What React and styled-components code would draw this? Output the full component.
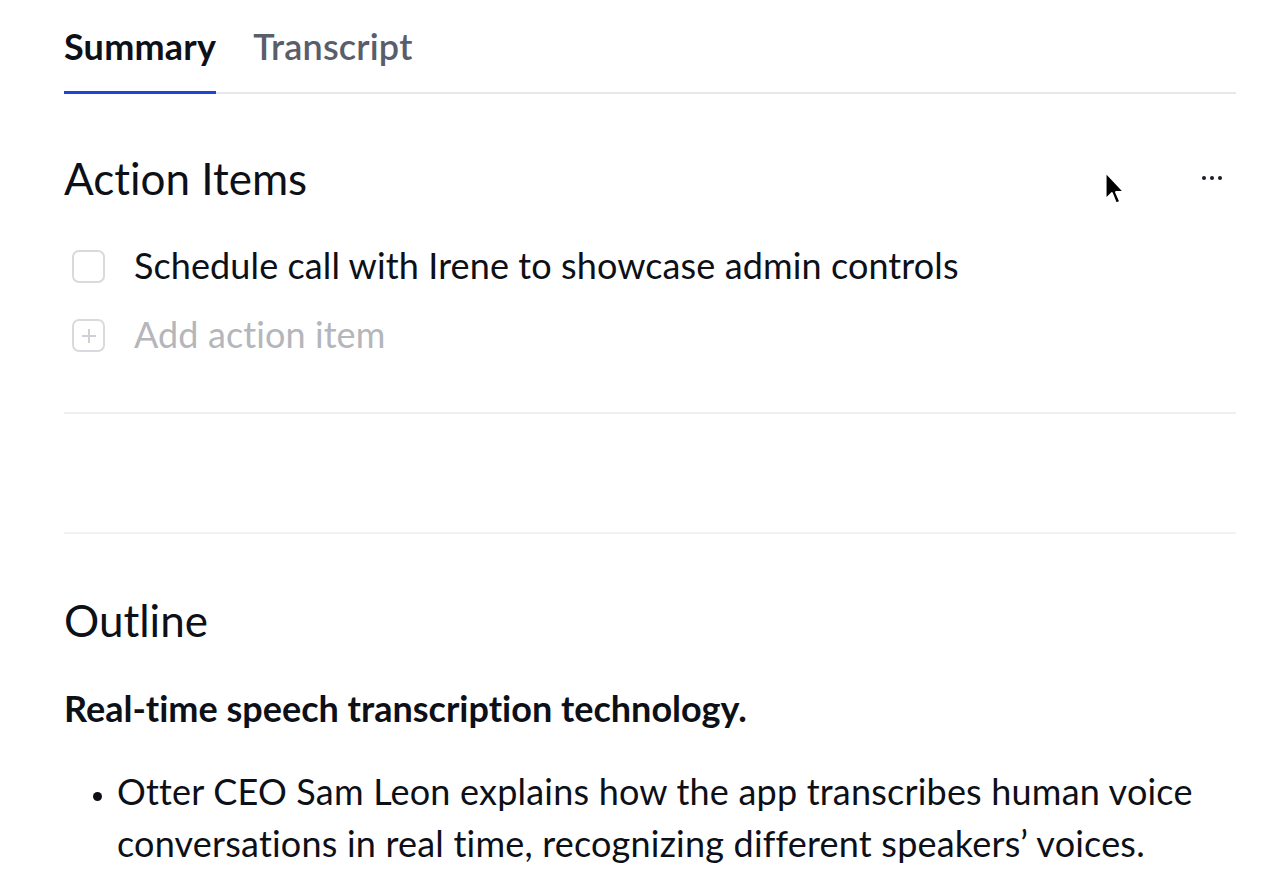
import React from "react";
import styled, { createGlobalStyle } from "styled-components";

const GlobalStyle = createGlobalStyle`
  body {
    margin: 0;
    background: #ffffff;
    font-family: Lato, "Noto Sans", sans-serif;
    font-variant-ligatures: none;
    color: #0d1017;
  }
`;

const Page = styled.div`
  position: relative;
  width: 1280px;
  height: 888px;
  overflow: hidden;
  padding: 0 44px 0 64px;
  box-sizing: border-box;
`;

const Tabs = styled.div`
  display: flex;
  gap: 37px;
  border-bottom: 2px solid #e6e7ea;
  padding-top: 28px;
`;

const Tab = styled.div`
  font-size: 36px;
  line-height: 36px;
  letter-spacing: 0.2px;
  font-weight: ${(p) => (p.active ? 700 : 600)};
  color: ${(p) => (p.active ? "#0d1017" : "#595e6a")};
  padding-bottom: 27px;
  margin-bottom: -2px;
  border-bottom: 3px solid ${(p) => (p.active ? "#1c44d8" : "transparent")};
`;

const Section = styled.section`
  border-bottom: 2px solid #eeeff1;
  padding: 62px 0 60px;
`;

const SectionHead = styled.div`
  display: flex;
  align-items: center;
  justify-content: space-between;
`;

const Heading = styled.h2`
  margin: 0;
  font-size: 44px;
  line-height: 44px;
  font-weight: 400;
`;

const MoreButton = styled.div`
  display: flex;
  gap: 4px;
  margin-right: 14px;
  span {
    width: 4px;
    height: 4px;
    border-radius: 50%;
    background: #1a1d24;
  }
`;

const ItemList = styled.div`
  display: flex;
  flex-direction: column;
  gap: 32px;
  margin-top: 46px;
  padding-left: 8px;
`;

const Item = styled.div`
  display: flex;
  align-items: center;
  gap: 29px;
  font-size: 36px;
  line-height: 36px;
  letter-spacing: 0.1px;
  color: ${(p) => (p.muted ? "#b4b6bb" : "#0d1017")};
`;

const Box = styled.div`
  width: 29px;
  height: 29px;
  margin-top: 4px;
  border: 2px solid #d9dadd;
  border-radius: 7px;
  display: flex;
  align-items: center;
  justify-content: center;
  flex-shrink: 0;
`;

const Spacer = styled.div`
  height: 118px;
  border-bottom: 2px solid #f1f2f4;
`;

const Outline = styled.div`
  padding-top: 64px;
`;

const SubHead = styled.h3`
  margin: 48px 0 0;
  font-size: 36px;
  line-height: 36px;
  font-weight: 700;
`;

const Bullets = styled.ul`
  margin: 39px 0 0;
  padding-left: 53px;
  font-size: 36px;
  line-height: 52px;
  letter-spacing: 0.2px;
  li::marker {
    font-size: 26px;
  }
`;

const Cursor = styled.svg`
  position: absolute;
  left: 1103px;
  top: 170px;
`;

export default function App() {
  return (
    <>
      <GlobalStyle />
      <Page>
        <Tabs>
          <Tab active>Summary</Tab>
          <Tab>Transcript</Tab>
        </Tabs>
        <Section>
          <SectionHead>
            <Heading>Action Items</Heading>
            <MoreButton>
              <span />
              <span />
              <span />
            </MoreButton>
          </SectionHead>
          <ItemList>
            <Item>
              <Box />
              Schedule call with Irene to showcase admin controls
            </Item>
            <Item muted>
              <Box>
                <svg width="18" height="18" viewBox="0 0 18 18">
                  <path d="M9 2v14M2 9h14" stroke="#cfd1d5" strokeWidth="2" />
                </svg>
              </Box>
              Add action item
            </Item>
          </ItemList>
        </Section>
        <Spacer />
        <Outline>
          <Heading>Outline</Heading>
          <SubHead>Real-time speech transcription technology.</SubHead>
          <Bullets>
            <li>
              Otter CEO Sam Leon explains how the app transcribes human voice
              conversations in real time, recognizing different speakers’ voices.
            </li>
          </Bullets>
        </Outline>
        <Cursor width="24" height="38" viewBox="0 0 22 36">
          <path
            d="M2 2 L2 28 L8 22 L12 32 L16 30 L12 21 L20 21 Z"
            fill="#000"
            stroke="#fff"
            strokeWidth="2"
            strokeLinejoin="round"
          />
        </Cursor>
      </Page>
    </>
  );
}
